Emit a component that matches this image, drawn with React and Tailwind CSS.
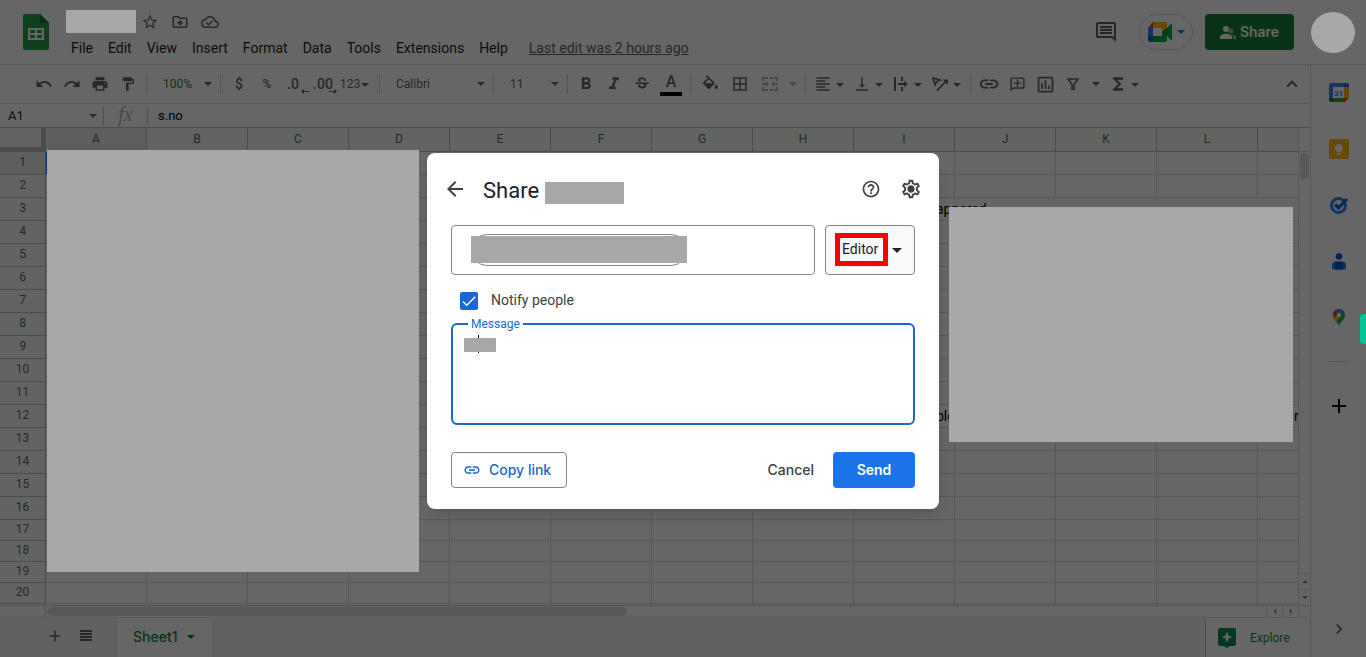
import React, { useState } from "react";
import {
  MdAdd,
  MdArrowBack,
  MdBorderAll,
  MdCheck,
  MdChevronRight,
  MdFormatAlignLeft,
  MdFormatBold,
  MdFormatItalic,
  MdFormatPaint,
  MdFunctions,
  MdHelpOutline,
  MdInsertLink,
  MdKeyboardArrowUp,
  MdOutlineAddComment,
  MdOutlineCloudDone,
  MdOutlineDriveFileMove,
  MdOutlineInsertChart,
  MdOutlineInsertComment,
  MdOutlineSettings,
  MdPrint,
  MdRedo,
  MdStarBorder,
  MdStrikethroughS,
  MdUndo,
  MdVerticalAlignBottom,
} from "react-icons/md";

const MENUS = [
  "File",
  "Edit",
  "View",
  "Insert",
  "Format",
  "Data",
  "Tools",
  "Extensions",
  "Help",
];

const COLUMNS = "ABCDEFGHIJKLM".split("");
const LAST_LABELLED_ROW = 20;
const ROWS = Array.from({ length: LAST_LABELLED_ROW + 1 }, (_, i) => i + 1);

// Long values spill over the cells to their right
const VALUES = {
  I3: { text: "appered", span: 5 },
  I12: { text: "ble", span: 4 },
  M12: { text: "r", span: 1 },
};

function Caret({ className = "h-1 w-2" }) {
  return (
    <svg
      viewBox="0 0 8 4"
      className={`shrink-0 fill-current ${className}`}
      aria-hidden="true"
    >
      <path d="M0 0h8L4 4z" />
    </svg>
  );
}

function Divider() {
  return <span className="mx-1 h-5 w-px shrink-0 bg-[#d3d5d8]" />;
}

function Tool({ label, wide, disabled, children }) {
  return (
    <button
      type="button"
      aria-label={label}
      disabled={disabled}
      className={`relative flex h-7 shrink-0 items-center justify-center ${
        wide ? "w-[30px]" : "w-7"
      } ${disabled ? "text-[#b4b6b9]" : ""}`}
    >
      {children}
    </button>
  );
}

function MenuTool({ label, children }) {
  return (
    <button
      type="button"
      aria-label={label}
      className="flex h-7 w-[39px] shrink-0 items-center"
    >
      <span className="flex w-[26px] justify-center">{children}</span>
      <Caret className="mt-px h-1 w-2" />
    </button>
  );
}

function ToolSelect({ label, value, className }) {
  return (
    <span className={`relative flex shrink-0 items-center ${className}`}>
      <select
        aria-label={label}
        defaultValue={value}
        className="h-7 w-full appearance-none bg-transparent pl-3 text-xs outline-none"
      >
        <option>{value}</option>
      </select>
      <Caret className="pointer-events-none absolute right-1 h-1 w-2" />
    </span>
  );
}

function DecimalArrow({ flip }) {
  return (
    <svg
      viewBox="0 0 8 5"
      className="absolute right-0 bottom-1 h-[5px] w-2 fill-current"
      aria-hidden="true"
    >
      <path d={flip ? "M8 2.5L5 0v2H0v1h5v2z" : "M0 2.5L3 0v2h5v1H3v2z"} />
    </svg>
  );
}

function SheetsLogo() {
  return (
    <svg viewBox="0 0 26 36" className="h-9 w-[26px] shrink-0" aria-hidden="true">
      <path d="M2 0h15l9 9v25a2 2 0 0 1-2 2H2a2 2 0 0 1-2-2V2a2 2 0 0 1 2-2z" fill="#23a047" />
      <path d="M17 0l9 9h-9z" fill="#14702e" />
      <path
        d="M5 14h16v12H5zm2 2v3h5v-3zm7 0v3h5v-3zm-7 5v3h5v-3zm7 0v3h5v-3z"
        fill="#fff"
        fillRule="evenodd"
      />
    </svg>
  );
}

function MeetLogo() {
  return (
    <svg viewBox="0 0 24 20" className="h-5 w-6 shrink-0" aria-hidden="true">
      <path d="M5 0v6H0z" fill="#ea4335" />
      <path d="M0 6h5v8H0z" fill="#2684fc" />
      <path d="M0 14h5v6H2a2 2 0 0 1-2-2z" fill="#0066da" />
      <path d="M5 0h12a2 2 0 0 1 2 2v4l-5 4V6H5z" fill="#ffba00" />
      <path d="M5 14h9v-4l5 4v4a2 2 0 0 1-2 2H5z" fill="#00ac47" />
      <path d="M14 10l5-4v8z" fill="#00832d" />
      <path d="M19 6l4-4q1-.6 1 .6v14.800q0 1.200-1 .6l-4-4z" fill="#00ac47" />
    </svg>
  );
}

function PeopleIcon() {
  return (
    <svg viewBox="0 0 16 13" className="h-[13px] w-4 fill-current" aria-hidden="true">
      <circle cx="6" cy="3" r="3" />
      <path d="M0 13v-2c0-2 4-3.200 6-3.200s6 1.200 6 3.200v2z" />
      <circle cx="11" cy="5" r="2.500" opacity=".5" />
      <path d="M13 13v-2c0-1.100-.6-2-1.500-2.600 2 .2 4.500 1.100 4.500 2.600v2z" opacity=".6" />
    </svg>
  );
}

function FillIcon() {
  return (
    <svg viewBox="3 0 18 17" className="-mt-1 h-[14px] w-[15px] fill-current" aria-hidden="true">
      <path d="M16.560 8.940L7.620 0 6.210 1.410l2.380 2.380-5.150 5.150c-.59.59-.59 1.540 0 2.120l5.500 5.500c.29.29.68.44 1.060.44s.77-.15 1.060-.44l5.500-5.500c.59-.58.59-1.530 0-2.120zM5.210 10L10 5.210 14.790 10H5.210zM19 11.500s-2 2.170-2 3.500c0 1.100.9 2 2 2s2-.9 2-2c0-1.330-2-3.500-2-3.500z" />
    </svg>
  );
}

function MergeIcon() {
  return (
    <svg viewBox="0 0 16 14" className="h-[14px] w-4 fill-current" aria-hidden="true">
      <path d="M0 0h6v2H2v2H0zM8 0h3v2H8zM12 0h4v4h-2V2h-2zM0 10h2v2h4v2H0zM8 12h3v2H8zM14 10h2v4h-4v-2h2zM0 6h4V4l3 3-3 3V8H0zM16 6h-4V4L9 7l3 3V8h4z" />
    </svg>
  );
}

function OverflowIcon() {
  return (
    <svg viewBox="0 0 14 14" className="h-[14px] w-[14px] fill-current" aria-hidden="true">
      <path d="M0 0h2v14H0zM7 0h2v4H7zM7 10h2v4H7zM4 6h6V4l4 3-4 3V8H4z" />
    </svg>
  );
}

function RotateIcon() {
  return (
    <svg
      viewBox="0 0 16 14"
      className="h-[14px] w-4 fill-none stroke-current"
      strokeWidth="1.700"
      aria-hidden="true"
    >
      <path d="M3.500 9L1 1l8.500 2.500M3 6.500L7 3" />
      <path d="M5 13.300L14 4.300" />
      <path d="M10.500 2.500H16V8z" fill="currentColor" stroke="none" />
    </svg>
  );
}

function FilterIcon() {
  return (
    <svg
      viewBox="0 0 12 12"
      className="h-3 w-3 fill-none stroke-current"
      strokeWidth="1.600"
      aria-hidden="true"
    >
      <path d="M1 1h10L7 6.500V12H5V6.500z" />
    </svg>
  );
}

function Header() {
  return (
    <header className="flex h-[65px] shrink-0 items-start border-b border-[#dadce0] pt-[14px] pr-[11px] pl-[23px]">
      <SheetsLogo />
      <div className="-mt-1 ml-[17px]">
        <div className="flex h-[23px] items-center text-[#5f6368]">
          <span className="relative z-20 mr-[5px] h-[23px] w-[70px] bg-[#a8a8a8]" />
          <button type="button" aria-label="Star">
            <MdStarBorder size={18} />
          </button>
          <button type="button" aria-label="Move" className="ml-3">
            <MdOutlineDriveFileMove size={18} />
          </button>
          <button type="button" aria-label="Document status" className="ml-3">
            <MdOutlineCloudDone size={18} />
          </button>
        </div>
        <nav className="mt-[5px] flex items-center gap-[15px] pl-[5px] text-sm text-[#202124]">
          {MENUS.map((menu) => (
            <button type="button" key={menu}>
              {menu}
            </button>
          ))}
          <a href="#history" className="ml-[6px] text-[#5f6368] underline">
            Last edit was 2 hours ago
          </a>
        </nav>
      </div>

      <div className="ml-auto flex items-center">
        <button type="button" aria-label="Comments" className="text-[#5f6368]">
          <MdOutlineInsertComment size={24} />
        </button>
        <button
          type="button"
          aria-label="Join a call"
          className="ml-[21px] flex h-9 w-[54px] items-center justify-center gap-[5px] rounded-full border border-[#dadce0] text-[#1a73e8]"
        >
          <MeetLogo />
          <Caret />
        </button>
        <button
          type="button"
          className="ml-3 flex h-9 w-[89px] items-center justify-center gap-1 rounded bg-[#188038] font-['Inter',sans-serif] text-sm font-semibold text-white"
        >
          <PeopleIcon />
          Share
        </button>
        <span className="relative z-20 -my-1 ml-[17px] h-[41px] w-11 rounded-[50%] bg-[#a8a8a8]" />
      </div>
    </header>
  );
}

function Toolbar() {
  return (
    <div
      role="toolbar"
      className="flex h-[39px] shrink-0 items-center overflow-hidden border-b border-[#dadce0] pl-[30px] text-[#5f6368]"
    >
      <Tool label="Undo">
        <MdUndo size={18} />
      </Tool>
      <Tool label="Redo">
        <MdRedo size={18} />
      </Tool>
      <Tool label="Print">
        <MdPrint size={18} />
      </Tool>
      <Tool label="Paint format">
        <MdFormatPaint size={16} />
      </Tool>
      <Divider />
      <ToolSelect label="Zoom" value="100%" className="w-[65px]" />
      <Divider />
      <Tool label="Format as currency">
        <span className="text-sm font-medium">$</span>
      </Tool>
      <Tool label="Format as percent">
        <span className="text-xs font-medium">%</span>
      </Tool>
      <Tool label="Decrease decimal places">
        <span className="pr-1 text-sm font-medium">.0</span>
        <DecimalArrow />
      </Tool>
      <Tool label="Increase decimal places">
        <span className="text-sm font-medium">.00</span>
        <DecimalArrow flip />
      </Tool>
      <button
        type="button"
        className="flex h-7 w-[38px] shrink-0 items-center gap-px pl-[3px] text-xs"
      >
        123
        <Caret className="mt-px h-1 w-2" />
      </button>
      <Divider />
      <ToolSelect label="Font" value="Calibri" className="w-[105px]" />
      <Divider />
      <ToolSelect label="Font size" value="11" className="w-[65px]" />
      <Divider />
      <Tool label="Bold">
        <MdFormatBold size={20} />
      </Tool>
      <Tool label="Italic">
        <MdFormatItalic size={20} />
      </Tool>
      <Tool label="Strikethrough">
        <MdStrikethroughS size={18} />
      </Tool>
      <Tool label="Text color" wide>
        <span className="-mt-1 text-base font-medium">A</span>
        <span className="absolute inset-x-1 bottom-[2px] h-1 bg-black" />
      </Tool>
      <Divider />
      <Tool label="Fill color" wide>
        <FillIcon />
      </Tool>
      <Tool label="Borders" wide>
        <MdBorderAll size={18} />
      </Tool>
      <Tool label="Merge cells" wide disabled>
        <MergeIcon />
      </Tool>
      <button
        type="button"
        aria-label="Select merge type"
        disabled
        className="flex h-7 w-4 shrink-0 items-center justify-center text-[#b4b6b9]"
      >
        <Caret />
      </button>
      <Divider />
      <MenuTool label="Horizontal align">
        <MdFormatAlignLeft size={18} />
      </MenuTool>
      <MenuTool label="Vertical align">
        <MdVerticalAlignBottom size={18} />
      </MenuTool>
      <MenuTool label="Text wrapping">
        <OverflowIcon />
      </MenuTool>
      <MenuTool label="Text rotation">
        <RotateIcon />
      </MenuTool>
      <Divider />
      <Tool label="Insert link">
        <MdInsertLink size={22} />
      </Tool>
      <Tool label="Insert comment">
        <MdOutlineAddComment size={17} className="-scale-x-100" />
      </Tool>
      <Tool label="Insert chart">
        <MdOutlineInsertChart size={21} />
      </Tool>
      <Tool label="Create a filter">
        <FilterIcon />
      </Tool>
      <button
        type="button"
        aria-label="Filter views"
        className="flex h-7 w-[18px] shrink-0 items-center justify-center"
      >
        <Caret />
      </button>
      <MenuTool label="Functions">
        <MdFunctions size={20} />
      </MenuTool>
      <button
        type="button"
        aria-label="Hide the menus"
        className="ml-auto flex h-7 w-9 shrink-0 items-center justify-center"
      >
        <MdKeyboardArrowUp size={22} />
      </button>
    </div>
  );
}

function FormulaBar() {
  return (
    <div className="flex h-6 shrink-0 items-center border-b border-[#bdbdbd]">
      <input
        aria-label="Name box"
        defaultValue="A1"
        className="w-[89px] bg-transparent pl-2 text-[13px] text-[#202124] outline-none"
      />
      <Caret className="h-1 w-2 text-[#5f6368]" />
      <span className="ml-[6px] h-[18px] w-px bg-[#c6c8ca]" />
      <span className="w-[43px] pb-1 text-center font-['Liberation_Serif',serif] text-xl leading-5 text-[#b4b6b9] italic">
        fx
      </span>
      <span className="h-[18px] w-px bg-[#c6c8ca]" />
      <input
        aria-label="Formula"
        defaultValue="s.no"
        className="min-w-0 flex-1 bg-transparent pl-[10px] text-[13px] text-black outline-none"
      />
    </div>
  );
}

function GridRow({ row }) {
  const cells = [];
  let skip = 0;

  COLUMNS.forEach((col) => {
    if (skip > 0) {
      skip -= 1;
      return;
    }
    const value = VALUES[col + row];
    if (value) skip = value.span - 1;
    cells.push(
      <td
        key={col}
        colSpan={value ? value.span : 1}
        className={`overflow-hidden border-r border-b border-[#dadce0] p-0 whitespace-nowrap ${
          col + row === "A1" ? "ring-2 ring-[#1a73e8] ring-inset" : ""
        } ${col === "I" ? "pl-[82px]" : "pl-9"}`}
      >
        {value?.text}
      </td>
    );
  });

  return (
    <tr className={row > 16 ? "h-[21px]" : "h-[23px]"}>
      <th
        scope="row"
        className={`border-r border-b border-[#bdbdbd] p-0 pb-[2px] text-xs leading-4 font-normal text-[#5f6368] ${
          row === 1 ? "bg-[#e8eaed]" : "bg-[#f4f9f6]"
        }`}
      >
        {row <= LAST_LABELLED_ROW ? row : null}
      </th>
      {cells}
    </tr>
  );
}

function Grid() {
  return (
    <div className="min-w-0 flex-1 overflow-hidden border-r border-[#dadce0]">
      <table className="w-[1359px] table-fixed border-separate border-spacing-0 text-sm leading-4 text-black">
        <colgroup>
          <col className="w-[46px]" />
          {COLUMNS.map((col) => (
            <col key={col} className="w-[101px]" />
          ))}
        </colgroup>
        <thead>
          <tr className="h-6">
            <td className="border-r-[5px] border-b-[5px] border-[#bcbcbc] bg-[#f4f9f6] p-0" />
            {COLUMNS.map((col) => (
              <th
                key={col}
                scope="col"
                className={`border-r border-b border-[#bdbdbd] p-0 pb-[2px] text-xs leading-4 font-normal text-[#5f6368] ${
                  col === "A" ? "bg-[#e8eaed]" : "bg-[#f4f9f6]"
                }`}
              >
                {col !== "M" && col}
              </th>
            ))}
          </tr>
        </thead>
        <tbody>
          {ROWS.map((row) => (
            <GridRow key={row} row={row} />
          ))}
        </tbody>
      </table>
    </div>
  );
}

function VerticalScroll() {
  return (
    <div className="flex w-[11px] shrink-0 flex-col text-[#80868b]">
      <span className="h-6 border-b border-[#dadce0]" />
      <span className="mx-px mt-px h-[26px] rounded-full bg-[#dadce0]" />
      <button
        type="button"
        aria-label="Scroll up"
        className="mt-auto flex h-4 items-center justify-center border-t border-[#dadce0]"
      >
        <Caret className="h-[3px] w-[6px] rotate-180" />
      </button>
      <button
        type="button"
        aria-label="Scroll down"
        className="flex h-4 items-center justify-center border-t border-[#dadce0]"
      >
        <Caret className="h-[3px] w-[6px]" />
      </button>
    </div>
  );
}

function HorizontalScroll() {
  return (
    <div className="flex h-3 shrink-0 items-stretch border-t border-[#cfd1d3] pr-[11px] text-[#80868b]">
      <span className="w-[46px] border-r border-[#cfd1d3] bg-[#f8f9fa]" />
      <div className="flex-1 pt-px pl-px">
        <span className="block h-[9px] w-[580px] max-w-full rounded-full bg-[#dadce0]" />
      </div>
      <button
        type="button"
        aria-label="Scroll left"
        className="flex w-4 items-center justify-center border-l border-[#dadce0]"
      >
        <Caret className="h-[3px] w-[6px] rotate-90" />
      </button>
      <button
        type="button"
        aria-label="Scroll right"
        className="flex w-[17px] items-center justify-center border-x border-[#dadce0]"
      >
        <Caret className="h-[3px] w-[6px] -rotate-90" />
      </button>
    </div>
  );
}

function SheetTabs() {
  return (
    <footer className="flex h-10 shrink-0 items-stretch border-t border-[#e4e6e8] bg-[#f1f3f4] text-[#5f6368]">
      <button type="button" aria-label="Add sheet" className="ml-[46px] pb-1">
        <MdAdd size={18} />
      </button>
      <button type="button" aria-label="All sheets" className="ml-4 pb-1">
        <svg viewBox="0 0 12 11" className="h-[11px] w-3 fill-current" aria-hidden="true">
          <path d="M0 0h12v2H0zM0 3h12v2H0zM0 6h12v2H0zM0 9h12v2H0z" />
        </svg>
      </button>
      <button
        type="button"
        className="ml-6 flex w-[97px] items-center gap-[9px] border-x border-[#e4e6e8] bg-white pb-[2px] pl-4 font-['Inter',sans-serif] text-sm font-medium text-[#188038]"
      >
        Sheet1
        <Caret />
      </button>
      <button
        type="button"
        className="ml-auto flex w-[105px] items-center border-l border-[#bdbdbd] bg-white pl-3 text-xs text-[#188038]"
      >
        <svg viewBox="0 0 18 20" className="mr-[14px] h-5 w-[18px]" aria-hidden="true">
          <path d="M2 0h14a2 2 0 0 1 2 2v14a2 2 0 0 1-2 2h-4l-3 2-3-2H2a2 2 0 0 1-2-2V2a2 2 0 0 1 2-2z" fill="#0b8a4e" />
          <path d="M9 3.500l1.600 3.900L14.500 9l-3.900 1.600L9 14.500l-1.600-3.900L3.500 9l3.900-1.600z" fill="#fff" />
        </svg>
        Explore
      </button>
    </footer>
  );
}

function CalendarIcon() {
  return (
    <svg viewBox="0 0 20 20" className="h-5 w-5" aria-hidden="true">
      <path d="M2 0h13v4H4v11H0V2a2 2 0 0 1 2-2z" fill="#4285f4" />
      <path d="M15 0h3a2 2 0 0 1 2 2v2h-5z" fill="#1967d2" />
      <path d="M15 4h5v11h-5z" fill="#fbbc04" />
      <path d="M0 15h4v4H2a2 2 0 0 1-2-2z" fill="#188038" />
      <path d="M4 15h11v4H4z" fill="#34a853" />
      <path d="M15 15h5l-5 5z" fill="#ea4335" />
      <path d="M4 4h11v11H4z" fill="#fff" />
      <text
        x="9.500"
        y="12.500"
        textAnchor="middle"
        fontFamily="Roboto, sans-serif"
        fontSize="8"
        fontWeight="700"
        fill="#4285f4"
      >
        31
      </text>
    </svg>
  );
}

function KeepIcon() {
  return (
    <svg viewBox="0 0 20 20" className="h-5 w-5" aria-hidden="true">
      <rect width="20" height="20" rx="2" fill="#fbbc04" />
      <path
        d="M10 5a4.200 4.200 0 0 1 2.300 7.600V13H7.700v-.4A4.200 4.200 0 0 1 10 5zM8 14h4v1.500H8z"
        fill="#fff"
      />
    </svg>
  );
}

function TasksIcon() {
  return (
    <svg viewBox="0 0 20 20" className="h-5 w-5 fill-none" aria-hidden="true">
      <circle cx="9.500" cy="10.500" r="7" stroke="#2684fc" strokeWidth="3" />
      <path d="M6 9.500l3.500 3.500L18 4" stroke="#0066da" strokeWidth="3.200" />
    </svg>
  );
}

function ContactsIcon() {
  return (
    <svg viewBox="0 0 14 17" className="h-[17px] w-[14px]" aria-hidden="true">
      <circle cx="7" cy="3.500" r="3.300" fill="#0057cc" />
      <path d="M4 8.500h6a4 4 0 0 1 4 4V15a1.500 1.500 0 0 1-1.500 1.500h-11A1.500 1.500 0 0 1 0 15v-2.500a4 4 0 0 1 4-4z" fill="#2f7cf6" />
      <path d="M3 8.700h8v7.800H3z" fill="#0057cc" />
    </svg>
  );
}

function MapsIcon() {
  return (
    <svg viewBox="0 0 12 17" className="h-[17px] w-3" aria-hidden="true">
      <path d="M6 17C5.500 13.500 0 10.500 0 6a6 6 0 0 1 12 0c0 4.500-5.500 7.500-6 11z" fill="#34a853" />
      <path d="M6 6L1.400 2.100A6 6 0 0 1 10.600 2z" fill="#4285f4" />
      <path d="M6 6L1.400 2.100A6 6 0 0 0 .6 8.600z" fill="#ea4335" />
      <path d="M6 6L.6 8.600C1.200 10 2.200 11.200 3.300 12.400L9 5.500z" fill="#fbbc04" />
      <circle cx="6" cy="6" r="2.200" fill="#fff" />
    </svg>
  );
}

function SidePanel() {
  const apps = [
    { name: "Calendar", icon: <CalendarIcon /> },
    { name: "Keep", icon: <KeepIcon /> },
    { name: "Tasks", icon: <TasksIcon /> },
    { name: "Contacts", icon: <ContactsIcon /> },
    { name: "Maps", icon: <MapsIcon /> },
  ];

  return (
    <aside className="flex w-14 shrink-0 flex-col items-center border-l border-[#dadce0]">
      {apps.map((app) => (
        <button
          type="button"
          key={app.name}
          aria-label={app.name}
          className="flex h-14 w-14 items-center justify-center"
        >
          {app.icon}
        </button>
      ))}
      <span className="mt-4 h-px w-5 bg-[#dadce0]" />
      <button type="button" aria-label="Get add-ons" className="mt-8 text-black">
        <MdAdd size={24} />
      </button>
      <button
        type="button"
        aria-label="Hide side panel"
        className="mt-auto mb-[18px] text-[#5f6368]"
      >
        <MdChevronRight size={20} />
      </button>
    </aside>
  );
}

function ShareDialog() {
  const [notify, setNotify] = useState(true);

  return (
    <section
      role="dialog"
      aria-label="Share"
      className="w-full max-w-[512px] rounded-lg bg-white px-6 pb-[21px] shadow-lg"
    >
      <div className="-mx-2 flex h-[72px] items-center text-[#3c4043]">
        <button type="button" aria-label="Back">
          <MdArrowBack size={24} />
        </button>
        <h1 className="mt-[3px] ml-4 text-[22px] leading-7 text-[#202124]">
          Share
        </h1>
        <span className="mt-2 ml-[6px] h-[22px] w-[79px] bg-[#a8a8a8]" />
        <button type="button" aria-label="Help" className="ml-auto">
          <MdHelpOutline size={20} />
        </button>
        <button
          type="button"
          aria-label="Settings"
          className="relative mr-px ml-[19px] flex items-center justify-center"
        >
          <MdOutlineSettings size={22} />
          <span className="absolute h-[6px] w-[6px] rounded-full bg-[#3c4043]" />
        </button>
      </div>

      <div className="flex gap-[10px]">
        <div className="flex h-[50px] flex-1 items-center rounded border border-[#80868b] pl-[19px]">
          <span className="flex h-8 w-[216px] items-center rounded-full border border-[#80868b]">
            <span className="-mx-px mb-px h-[27px] flex-1 bg-[#a8a8a8]" />
          </span>
        </div>
        <label className="relative flex h-[50px] w-[90px] items-center rounded border border-[#80868b] bg-[#f8f9fa]">
          <select
            aria-label="Role"
            defaultValue="Editor"
            className="h-full w-full appearance-none bg-transparent pb-[2px] pl-4 text-sm text-[#202124] outline-none"
          >
            <option>Editor</option>
          </select>
          <svg
            viewBox="0 0 10 5"
            className="pointer-events-none absolute right-3 h-[5px] w-[10px] fill-[#202124]"
            aria-hidden="true"
          >
            <path d="M0 0h10L5 5z" />
          </svg>
          <span className="pointer-events-none absolute top-[7px] left-[9px] h-[33px] w-[53px] border-[5px] border-[#fe0000]" />
        </label>
      </div>

      <label className="mt-4 ml-[9px] flex h-5 items-center gap-[13px] text-sm text-[#5f6368]">
        <span className="relative flex h-[18px] w-[18px]">
          <input
            type="checkbox"
            checked={notify}
            onChange={(e) => setNotify(e.target.checked)}
            className="h-[18px] w-[18px] appearance-none rounded-xs bg-[#1967d2]"
          />
          {notify && (
            <MdCheck
              size={18}
              className="pointer-events-none absolute inset-0 text-white"
            />
          )}
        </span>
        <span className="pb-[2px] text-[#3c4043]">Notify people</span>
      </label>

      <div className="relative mt-3">
        <label
          htmlFor="message"
          className="absolute -top-[7px] left-[17px] bg-white px-[3px] text-xs text-[#1967d2]"
        >
          Message
        </label>
        <textarea
          id="message"
          className="block h-[102px] w-full resize-none rounded-md border-2 border-[#1967d2] p-3 outline-none"
        />
        <span className="absolute top-3 left-[27px] h-[18px] w-px bg-black" />
        <span className="absolute top-[15px] left-[13px] h-[14px] w-8 bg-[#a8a8a8]" />
      </div>

      <div className="mt-[27px] flex items-center font-['Inter',sans-serif] text-sm font-medium">
        <button
          type="button"
          className="flex h-9 items-center gap-2 rounded border border-[#80868b] pr-[15px] pl-[11px] text-[#1967d2]"
        >
          <MdInsertLink size={18} />
          Copy link
        </button>
        <button type="button" className="ml-auto text-[#3c4043]">
          Cancel
        </button>
        <button
          type="button"
          className="ml-[19px] h-9 w-[82px] rounded bg-[#1a73e8] font-semibold text-white"
        >
          Send
        </button>
      </div>
    </section>
  );
}

export default function App() {
  return (
    <div className="relative flex h-screen flex-col overflow-hidden bg-white font-['Roboto',sans-serif]">
      <Header />

      <div className="flex min-h-0 flex-1">
        <main className="flex min-w-0 flex-1 flex-col">
          <Toolbar />
          <FormulaBar />
          <div className="flex min-h-0 flex-1">
            <Grid />
            <VerticalScroll />
          </div>
          <HorizontalScroll />
          <SheetTabs />
        </main>
        <SidePanel />
      </div>

      {/* Backdrop */}
      <div className="absolute inset-0 z-10 bg-black/60" />

      {/* Hidden cell ranges */}
      <div className="absolute top-[150px] left-[47px] z-20 h-[422px] w-[372px] bg-[#a8a8a8]" />
      <div className="absolute top-[207px] right-[73px] z-20 h-[235px] w-[344px] bg-[#a8a8a8]" />

      {/* Extension handle */}
      <div className="absolute top-[314px] right-0 z-20 h-[30px] w-[6px] rounded-l bg-[#00c796]" />

      <div className="absolute inset-0 z-30 flex items-center justify-center pt-[5px]">
        <ShareDialog />
      </div>
    </div>
  );
}
